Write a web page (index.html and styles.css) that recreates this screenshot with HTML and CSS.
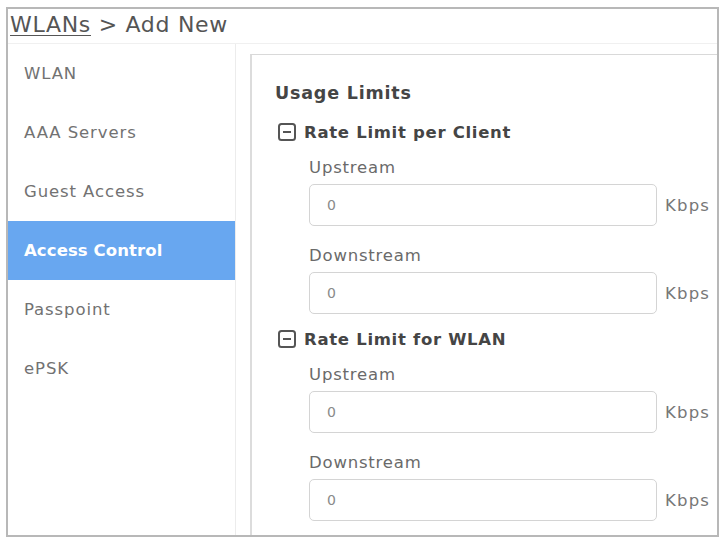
FILE: index.html
```html
<!DOCTYPE html>
<html>
<head>
<meta charset="utf-8">
<link rel="stylesheet" href="styles.css">
</head>
<body>
<div class="frame">
  <div class="header"><span class="crumb-link">WLANs</span> &gt; Add New</div>
  <div class="main">
    <nav class="sidebar">
      <div class="nav-item">WLAN</div>
      <div class="nav-item">AAA Servers</div>
      <div class="nav-item">Guest Access</div>
      <div class="nav-item active">Access Control</div>
      <div class="nav-item">Passpoint</div>
      <div class="nav-item">ePSK</div>
    </nav>
    <section class="panel">
      <h2 class="panel-title">Usage Limits</h2>
      <div class="group">
        <div class="group-head">
          <svg class="toggle" width="18" height="18" viewBox="0 0 18 18"><rect x="1" y="1" width="16" height="16" rx="2.5" fill="none" stroke="#555" stroke-width="2"/><line x1="5" y1="9" x2="13" y2="9" stroke="#555" stroke-width="2"/></svg>
          <span>Rate Limit per Client</span>
        </div>
        <div class="field">
          <div class="label">Upstream</div>
          <div class="input-row"><div class="input">0</div><span class="unit">Kbps</span></div>
        </div>
        <div class="field">
          <div class="label">Downstream</div>
          <div class="input-row"><div class="input">0</div><span class="unit">Kbps</span></div>
        </div>
      </div>
      <div class="group second">
        <div class="group-head">
          <svg class="toggle" width="18" height="18" viewBox="0 0 18 18"><rect x="1" y="1" width="16" height="16" rx="2.5" fill="none" stroke="#555" stroke-width="2"/><line x1="5" y1="9" x2="13" y2="9" stroke="#555" stroke-width="2"/></svg>
          <span>Rate Limit for WLAN</span>
        </div>
        <div class="field">
          <div class="label">Upstream</div>
          <div class="input-row"><div class="input">0</div><span class="unit">Kbps</span></div>
        </div>
        <div class="field">
          <div class="label">Downstream</div>
          <div class="input-row"><div class="input">0</div><span class="unit">Kbps</span></div>
        </div>
      </div>
    </section>
  </div>
</div>
</body>
</html>
```
FILE: styles.css
```css
html, body {
  margin: 0;
  padding: 0;
  background: #fff;
}
body {
  font-family: "DejaVu Sans", "Open Sans", sans-serif;
  color: #555;
}
.frame {
  margin: 7px 2px 2px 6px;
  height: 526px;
  border: 2px solid #b8b8b8;
  display: flex;
  flex-direction: column;
  overflow: hidden;
}
.header {
  height: 35px;
  line-height: 31px;
  padding-left: 2px;
  font-size: 22px;
  letter-spacing: 0.7px;
  color: #555;
  border-bottom: 1px solid #f0f0f0;
  box-sizing: border-box;
}
.crumb-link {
  text-decoration: underline;
  text-underline-offset: 3px;
  text-decoration-thickness: 1px;
}
.main {
  flex: 1;
  display: flex;
  gap: 14px;
}
.sidebar {
  width: 227px;
  border-right: 1px solid #ececec;
  display: flex;
  flex-direction: column;
}
.nav-item {
  height: 59px;
  line-height: 60px;
  padding-left: 16px;
  font-size: 16.5px;
  letter-spacing: 0.9px;
  color: #727272;
}
.nav-item.active {
  background: #68a7f0;
  color: #fff;
  font-weight: 700;
  letter-spacing: 0.1px;
}
.panel {
  flex: 1;
  margin-top: 10px;
  border-top: 1px solid #d9d9d9;
  border-left: 2px solid #dcdcdc;
  padding: 26px 0 0 23px;
}
.panel-title {
  margin: 0;
  font-size: 17.5px;
  line-height: 24px;
  letter-spacing: 0.8px;
  font-weight: 700;
  color: #454545;
}
.group {
  margin-top: 15px;
}
.group.second {
  margin-top: 13px;
}
.group-head {
  display: flex;
  align-items: center;
  gap: 8px;
  height: 24px;
  padding-left: 3px;
  font-size: 16.5px;
  letter-spacing: 0.7px;
  font-weight: 700;
  color: #454545;
}
.toggle {
  flex: none;
}
.field {
  padding-left: 34px;
  margin-top: 12px;
}
.field + .field {
  margin-top: 18px;
}
.label {
  font-size: 16.5px;
  line-height: 24px;
  letter-spacing: 0.8px;
  color: #6a6a6a;
  margin-bottom: 4px;
}
.input-row {
  display: flex;
  align-items: center;
  gap: 8px;
}
.input {
  width: 348px;
  height: 42px;
  box-sizing: border-box;
  border: 1px solid #d4d4d4;
  border-radius: 5px;
  padding-left: 17px;
  line-height: 40px;
  font-size: 14px;
  color: #8a8a8a;
}
.unit {
  font-size: 16.5px;
  letter-spacing: 1.2px;
  color: #777;
}
```
